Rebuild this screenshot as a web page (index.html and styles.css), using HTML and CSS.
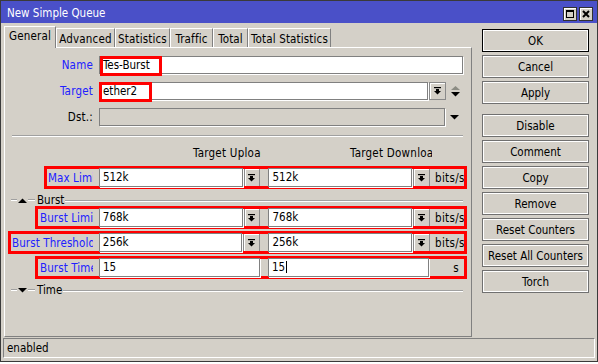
FILE: index.html
```html
<!DOCTYPE html>
<html>
<head>
<meta charset="utf-8">
<link rel="stylesheet" href="styles.css">
</head>
<body>
<div class="window">
  <div class="titlebar">
    <span class="title">New Simple Queue</span>
    <div class="tb-btns">
      <span class="tb-btn"><svg width="12" height="12" viewBox="0 0 12 12"><rect x="2.5" y="2.5" width="7" height="7" fill="none" stroke="#000"/><rect x="2" y="2" width="8" height="2" fill="#000"/></svg></span>
      <span class="tb-btn"><svg width="12" height="12" viewBox="0 0 12 12"><path d="M3 3 L9 9 M9 3 L3 9" stroke="#000" stroke-width="2"/></svg></span>
    </div>
  </div>
  <div class="body">
    <div class="left">
      <div class="tabs">
        <span class="tab active w-general">General</span>
        <span class="tab w-adv">Advanced</span>
        <span class="tab w-stat">Statistics</span>
        <span class="tab w-traf">Traffic</span>
        <span class="tab w-total">Total</span>
        <span class="tab w-tstat">Total Statistics</span>
      </div>
      <div class="panel">
        <div class="row r-name">
          <span class="lbl blue">Name</span>
          <span class="inp w-name">Tes-Burst<span class="mark m-name"></span></span>
        </div>
        <div class="row r-next">
          <span class="lbl blue">Target</span>
          <span class="inp w-target">ether2<span class="mark m-target"></span></span>
          <span class="dd"><svg width="7" height="8" viewBox="0 0 7 8"><rect x="0" y="0" width="7" height="1.2"/><rect x="2" y="2" width="3" height="2"/><polygon points="0,4 7,4 3.5,7.5"/></svg></span>
          <span class="spin"><svg width="9" height="11" viewBox="0 0 9 11"><polygon points="0,4 9,4 4.5,0" fill="#8c8c84"/><polygon points="0,6 9,6 4.5,10.5" fill="#000"/></svg></span>
        </div>
        <div class="row r-next">
          <span class="lbl">Dst.:</span>
          <span class="inp dis w-dst"></span>
          <span class="spin"><svg width="9" height="5" viewBox="0 0 9 5"><polygon points="0,0 9,0 4.5,4.5" fill="#000"/></svg></span>
        </div>
        <div class="sep"></div>
        <div class="colhead">
          <span class="ch ch1">Target Upload</span>
          <span class="ch ch2">Target Download</span>
        </div>
        <div class="drow d-max">
          <span class="dl">Max Limit</span>
          <span class="inp w-half">512k</span>
          <span class="dd"><svg width="7" height="8" viewBox="0 0 7 8"><rect x="0" y="0" width="7" height="1.2"/><rect x="2" y="2" width="3" height="2"/><polygon points="0,4 7,4 3.5,7.5"/></svg></span>
          <span class="inp w-half g2">512k</span>
          <span class="dd"><svg width="7" height="8" viewBox="0 0 7 8"><rect x="0" y="0" width="7" height="1.2"/><rect x="2" y="2" width="3" height="2"/><polygon points="0,4 7,4 3.5,7.5"/></svg></span>
          <span class="unit">bits/s</span>
        </div>
        <div class="sect s-burst">
          <span class="dash d1"></span>
          <svg class="tri" width="9" height="5" viewBox="0 0 9 5"><polygon points="0,5 9,5 4.5,0.5" fill="#000"/></svg>
          <span class="dash d2"></span>
          <span class="stext">Burst</span>
          <span class="dash grow"></span>
        </div>
        <div class="drow d-bl">
          <span class="dl">Burst Limit</span>
          <span class="inp w-half">768k</span>
          <span class="dd"><svg width="7" height="8" viewBox="0 0 7 8"><rect x="0" y="0" width="7" height="1.2"/><rect x="2" y="2" width="3" height="2"/><polygon points="0,4 7,4 3.5,7.5"/></svg></span>
          <span class="inp w-half g2">768k</span>
          <span class="dd"><svg width="7" height="8" viewBox="0 0 7 8"><rect x="0" y="0" width="7" height="1.2"/><rect x="2" y="2" width="3" height="2"/><polygon points="0,4 7,4 3.5,7.5"/></svg></span>
          <span class="unit">bits/s</span>
        </div>
        <div class="drow d-bt">
          <span class="dl">Burst Threshold</span>
          <span class="inp w-half">256k</span>
          <span class="dd"><svg width="7" height="8" viewBox="0 0 7 8"><rect x="0" y="0" width="7" height="1.2"/><rect x="2" y="2" width="3" height="2"/><polygon points="0,4 7,4 3.5,7.5"/></svg></span>
          <span class="inp w-half g2">256k</span>
          <span class="dd"><svg width="7" height="8" viewBox="0 0 7 8"><rect x="0" y="0" width="7" height="1.2"/><rect x="2" y="2" width="3" height="2"/><polygon points="0,4 7,4 3.5,7.5"/></svg></span>
          <span class="unit">bits/s</span>
        </div>
        <div class="drow d-time">
          <span class="dl">Burst Time</span>
          <span class="inp w-full">15</span>
          <span class="inp w-full g2">15<span class="caret"></span></span>
          <span class="unit right">s</span>
        </div>
        <div class="sect s-time">
          <span class="dash d1"></span>
          <svg class="tri" width="9" height="5" viewBox="0 0 9 5"><polygon points="0,0 9,0 4.5,4.5" fill="#000"/></svg>
          <span class="dash d2"></span>
          <span class="stext">Time</span>
          <span class="dash grow"></span>
        </div>
      </div>
    </div>
    <div class="buttons">
      <span class="btn def">OK</span>
      <span class="btn">Cancel</span>
      <span class="btn">Apply</span>
      <span class="btn gap">Disable</span>
      <span class="btn">Comment</span>
      <span class="btn">Copy</span>
      <span class="btn">Remove</span>
      <span class="btn">Reset Counters</span>
      <span class="btn">Reset All Counters</span>
      <span class="btn">Torch</span>
    </div>
  </div>
  <div class="status">enabled</div>
</div>
</body>
</html>
```
FILE: styles.css
```css
* { box-sizing: border-box; }
html, body { margin: 0; padding: 0; background: #fff; }
body {
  font-family: "DejaVu Sans Condensed", "DejaVu Sans", sans-serif;
  font-stretch: condensed;
  font-size: 11.5px;
  color: #000;
}
.window {
  width: 598px;
  height: 362px;
  border: 1px solid #3a3a3a;
  background: #d4d0c8;
  display: flex;
  flex-direction: column;
}
.titlebar {
  height: 22px;
  background: #4a50c8;
  display: flex;
  align-items: center;
  justify-content: space-between;
  padding-left: 6px;
  padding-right: 4px;
  color: #fff;
}
.title { line-height: 14px; margin-top: 1px; }
.tb-btns { display: flex; gap: 2px; margin-top: 4px; }
.tb-btn {
  width: 14px; height: 14px;
  background: #d4d0c8;
  border: 1px solid #303030;
  box-shadow: inset 1px 1px 0 #fff;
  display: flex; align-items: center; justify-content: center;
}
.body {
  height: 315px;
  display: flex;
  padding-left: 3px;
}
.left { width: 468px; margin-top: 3px; display: flex; flex-direction: column; }
.tabs { height: 21px; display: flex; align-items: flex-end; }
.tab {
  height: 19px;
  border-top: 1px solid #fff;
  border-left: 1px solid #fff;
  border-right: 1px solid #808080;
  display: flex; align-items: center; justify-content: center;
  white-space: nowrap;
  overflow: hidden;
  padding-top: 1px;
  letter-spacing: 0.15px;
}
.tab.active {
  height: 22px;
  margin-bottom: -1px;
  position: relative;
  z-index: 1;
  background: #d4d0c8;
  padding-top: 0;
  padding-bottom: 4px;
}
.w-general { width: 52px; }
.w-adv { width: 59px; }
.w-stat { width: 55px; }
.w-traf { width: 43px; }
.w-total { width: 35px; }
.w-tstat { width: 83px; }
.panel {
  height: 290px;
  border-top: 1px solid #fff;
  border-left: 1px solid #fff;
  border-right: 1px solid #808080;
  border-bottom: 1px solid #808080;
  display: flex;
  flex-direction: column;
}
.row { display: flex; align-items: center; height: 18px; margin-top: 8px; }
.r-next { margin-top: 8px; }
.lbl { width: 88px; text-align: right; margin-right: 6px; white-space: nowrap; letter-spacing: 0.2px; }
.blue { color: #2020ff; }
.inp {
  height: 18px;
  background: #fff;
  border: 1px solid #808080;
  box-shadow: 1px 1px 0 #fff;
  padding-left: 3px;
  line-height: 16px;
  white-space: nowrap;
  position: relative;
  display: block;
}
.inp.dis { background: #d4d0c8; }
.w-name { width: 364px; }
.w-target { width: 329px; }
.w-dst { width: 346px; }
.mark {
  position: absolute;
  border: 3px solid #ff0000;
  top: -1px;
}
.m-name { left: 0; width: 62px; height: 20px; }
.m-target { left: -1px; width: 53px; height: 20px; }
.dd {
  width: 17px; height: 18px;
  margin-left: 1px;
  border: 1px solid #8a8a8a;
  box-shadow: inset 1px 1px 0 #fff;
  background: #d4d0c8;
  display: flex; align-items: center; justify-content: center;
}
.spin { margin-left: 5px; width: 9px; display: flex; align-items: center; }
.sep {
  margin-top: 9px;
  margin-left: 7px;
  width: 451px;
  height: 2px;
  border-top: 1px solid #a0a0a0;
  border-bottom: 1px solid #fff;
}
.colhead { display: flex; height: 14px; margin-top: 9px; margin-left: 94px; line-height: 14px; letter-spacing: 0.25px; }
.ch { overflow: hidden; white-space: nowrap; display: block; }
.ch1 { width: 162px; padding-left: 94px; }
.ch2 { width: 171px; padding-left: 89px; }
.drow {
  display: flex;
  align-items: center;
  height: 19px;
  width: 419px;
  outline: 3px solid #ff0000;
  outline-offset: -1px;
}
.drow .inp { height: 19px; line-height: 17px; }
.drow .dd { height: 19px; }
.dl {
  color: #2020ff;
  white-space: nowrap;
  overflow: hidden;
  margin-right: 6px;
  letter-spacing: 0.1px;
}
.d-max { margin-top: 8px; margin-left: 41px; }
.d-max .dl { width: 47px; padding-left: 2px; }
.d-bl { margin-top: 1px; margin-left: 32px; width: 428px; }
.d-bl .dl { width: 56px; padding-left: 3px; }
.d-bt { margin-top: 6px; margin-left: 5px; width: 455px; }
.d-bt .dl { width: 83px; padding-left: 2px; }
.d-time { margin-top: 6px; margin-left: 32px; width: 428px; }
.d-time .dl { width: 56px; padding-left: 3px; }
.w-half { width: 144px; }
.w-full { width: 161px; }
.g2 { margin-left: 8px; }
.unit { margin-left: 5px; width: 30px; overflow: hidden; white-space: nowrap; display: block; letter-spacing: 0.3px; }
.unit.right { text-align: right; padding-right: 5px; }
.caret {
  display: inline-block;
  width: 1px;
  height: 12px;
  background: #000;
  vertical-align: -2px;
  margin-left: 1px;
}
.sect {
  display: flex;
  align-items: center;
  height: 14px;
  margin-left: 6px;
  width: 452px;
}
.s-burst { margin-top: 6px; }
.s-time { margin-top: 6px; }
.dash { height: 2px; border-top: 1px solid #a0a0a0; border-bottom: 1px solid #fff; display: block; }
.d1 { width: 6px; margin-right: 1px; }
.d2 { width: 7px; margin-left: 1px; }
.tri { display: block; }
.stext { margin-left: 2px; margin-right: 1px; line-height: 14px; }
.grow { flex: 1; margin-top: 1px; }
.buttons { margin-left: 10px; margin-top: 6px; width: 107px; display: flex; flex-direction: column; }
.btn {
  height: 23px;
  margin-bottom: 3px;
  border: 1px solid #707070;
  box-shadow: inset 0 0 0 1px #fff;
  display: flex; align-items: center; justify-content: center;
  white-space: nowrap;
}
.btn.def { border-color: #000; }
.btn.gap { margin-top: 7px; }
.status {
  height: 20px;
  margin: 0 2px;
  border-top: 1px solid #808080;
  border-left: 1px solid #808080;
  border-right: 1px solid #fff;
  border-bottom: 1px solid #fff;
  padding-left: 3px;
  line-height: 18px;
}
```
